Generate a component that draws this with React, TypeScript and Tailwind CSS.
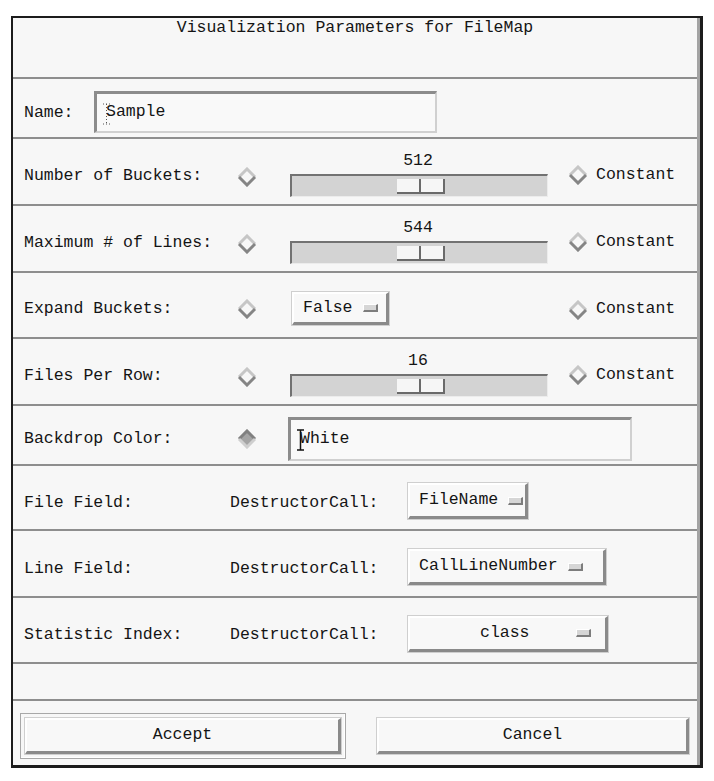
import React from "react";

const FONT = { fontFamily: '"Liberation Mono", "DejaVu Sans Mono", monospace' };

const Diamond: React.FC<{ on?: boolean }> = ({ on }) => (
  <svg width="20" height="20" viewBox="0 0 20 20" className="shrink-0">
    {on && <polygon points="10,2 18,10 10,18 2,10" fill="#a4a4a4" />}
    <path d="M2,10 L10,2 L18,10" fill="none" stroke={on ? "#808080" : "#c6c6c6"} strokeWidth="3" />
    <path d="M2,10 L10,18 L18,10" fill="none" stroke={on ? "#cfcfcf" : "#858585"} strokeWidth="3" />
  </svg>
);

const Caret: React.FC<{ dotted?: boolean }> = ({ dotted }) => (
  <svg width="9" height="22" viewBox="0 0 9 22" className="absolute left-[5px] top-[9px]">
    <path
      d="M1,1 L8,1 M4.5,1 L4.5,21 M1,21 L8,21"
      fill="none"
      stroke={dotted ? "#555" : "#111"}
      strokeWidth={dotted ? 1 : 1.5}
      strokeDasharray={dotted ? "1 2" : undefined}
    />
  </svg>
);

const Indicator = () => (
  <span className="inline-block w-[15px] h-[8px] bg-[#d6d6d6] border-t border-l border-t-white border-l-white border-b-2 border-r-2 border-b-[#7d7d7d] border-r-[#7d7d7d]" />
);

const raised =
  "bg-[#f8f8f8] border-t-2 border-l-2 border-t-white border-l-white border-b-[3px] border-r-[3px] border-b-[#8a8a8a] border-r-[#8a8a8a] shadow-[0_0_0_1px_#cfcfcf]";

const OptionButton: React.FC<{ label: string; w: string; center?: boolean; h?: string }> = ({ label, w, center, h }) => (
  <div
    className={`${w} ${h ?? "h-[36px]"} flex items-center ${center ? "justify-between pl-[70px] pr-[14px]" : "gap-[10px] pl-[9px]"} ${raised}`}
  >
    <span>{label}</span>
    <Indicator />
  </div>
);

const Slider: React.FC<{ value: string }> = ({ value }) => (
  <div className="w-[258px] self-stretch flex flex-col justify-end pb-[7px]">
    <div className="relative h-[16px] mb-[5px]">
      <span className="absolute left-[128px] -translate-x-1/2 leading-[16px]">{value}</span>
    </div>
    <div className="relative h-[23px] bg-[#d3d3d3] border-t-2 border-l-2 border-t-[#727272] border-l-[#727272] border-b border-r border-b-[#ececec] border-r-[#ececec]">
      <div className="absolute left-[105px] top-[3px] flex h-[15px]">
        <div className="w-[24px] h-full bg-[#f6f6f6] border-b-2 border-r-2 border-b-[#6a6a6a] border-r-[#6a6a6a]" />
        <div className="w-[24px] h-full bg-[#f6f6f6] border-b-2 border-r-2 border-b-[#6a6a6a] border-r-[#6a6a6a]" />
      </div>
    </div>
  </div>
);

const Constant: React.FC<{ pad?: string }> = ({ pad }) => (
  <div className={`flex items-center gap-[8px] ml-[20px] ${pad ?? ""}`}>
    <Diamond />
    <span>Constant</span>
  </div>
);

const Row: React.FC<{ h: string; children: React.ReactNode }> = ({ h, children }) => (
  <div className={`${h} flex items-center pt-[7px] border-b-2 border-b-[#8e8e8e]`}>{children}</div>
);

const SliderRow: React.FC<{ label: string; value: string }> = ({ label, value }) => (
  <div className="h-[67px] flex items-center border-b-2 border-b-[#8e8e8e]">
    <span className="w-[224px] pl-[11px] pt-[10px]">{label}</span>
    <div className="pt-[10px]">
      <Diamond />
    </div>
    <div className="w-[33px]" />
    <Slider value={value} />
    <Constant pad="pt-[7px]" />
  </div>
);

const TextField: React.FC<{ value: string; w: string; h: string; dotted?: boolean }> = ({ value, w, h, dotted }) => (
  <div
    className={`relative ${w} ${h} flex items-center pl-[9px] bg-[#f9f9f9] border-t-[3px] border-l-[3px] border-t-[#8c8c8c] border-l-[#8c8c8c] border-b-2 border-r-2 border-b-[#d0d0d0] border-r-[#d0d0d0]`}
  >
    <Caret dotted={dotted} />
    <span>{value}</span>
  </div>
);

export default function App() {
  return (
    <div className="w-[714px] h-[781px] bg-white pt-[16px] pl-[11px] text-[16.5px] text-[#141414]" style={FONT}>
      <div className="w-[692px] h-[752px] bg-[#f7f7f7] border-2 border-r-[3px] border-b-[3px] border-[#1c1c1c] flex flex-col">
        <div className="flex-1 flex flex-col border-r-[3px] border-r-[#a3a3a3]">
          <div className="h-[61px] border-b-2 border-b-[#8e8e8e] flex justify-center pt-[1px]">
            <span className="leading-[18px]">Visualization Parameters for FileMap</span>
          </div>

          <Row h="h-[60px]">
            <span className="w-[81px] pl-[11px] pt-[4px]">Name:</span>
            <TextField value="Sample" w="w-[343px]" h="h-[42px]" dotted />
          </Row>

          <SliderRow label="Number of Buckets:" value="512" />
          <SliderRow label="Maximum # of Lines:" value="544" />

          <Row h="h-[66px]">
            <span className="w-[224px] pl-[11px] pt-[2px]">Expand Buckets:</span>
            <Diamond />
            <div className="w-[35px]" />
            <div className="w-[256px]">
              <OptionButton label="False" w="w-[97px]" h="h-[33px]" />
            </div>
            <Constant pad="pt-[2px]" />
          </Row>

          <SliderRow label="Files Per Row:" value="16" />

          <Row h="h-[60px]">
            <span className="w-[224px] pl-[11px] pt-[2px]">Backdrop Color:</span>
            <Diamond on />
            <div className="w-[31px]" />
            <TextField value="White" w="w-[344px]" h="h-[44px]" />
          </Row>

          <Row h="h-[65px]">
            <span className="w-[217px] pl-[11px] pt-[4px]">File Field:</span>
            <span className="w-[178px] pt-[4px]">DestructorCall:</span>
            <OptionButton label="FileName" w="w-[120px]" />
          </Row>

          <Row h="h-[67px]">
            <span className="w-[217px] pl-[11px] pt-[4px]">Line Field:</span>
            <span className="w-[178px] pt-[4px]">DestructorCall:</span>
            <OptionButton label="CallLineNumber" w="w-[198px]" />
          </Row>

          <Row h="h-[66px]">
            <span className="w-[217px] pl-[11px] pt-[4px]">Statistic Index:</span>
            <span className="w-[178px] pt-[4px]">DestructorCall:</span>
            <OptionButton label="class" w="w-[200px]" center />
          </Row>

          <div className="h-[37px] border-b-2 border-b-[#8e8e8e]" />

          <div className="flex-1 flex items-center pt-[6px] pl-[7px] pr-[8px]">
            <div className="p-[4px] border border-[#a8a8a8] shadow-[inset_-1px_-1px_0_#ffffff]">
              <div className={`w-[316px] h-[36px] flex items-center justify-center ${raised}`}>Accept</div>
            </div>
            <div className="flex-1" />
            <div className={`w-[312px] h-[36px] flex items-center justify-center ${raised}`}>Cancel</div>
          </div>
        </div>
      </div>
    </div>
  );
}
